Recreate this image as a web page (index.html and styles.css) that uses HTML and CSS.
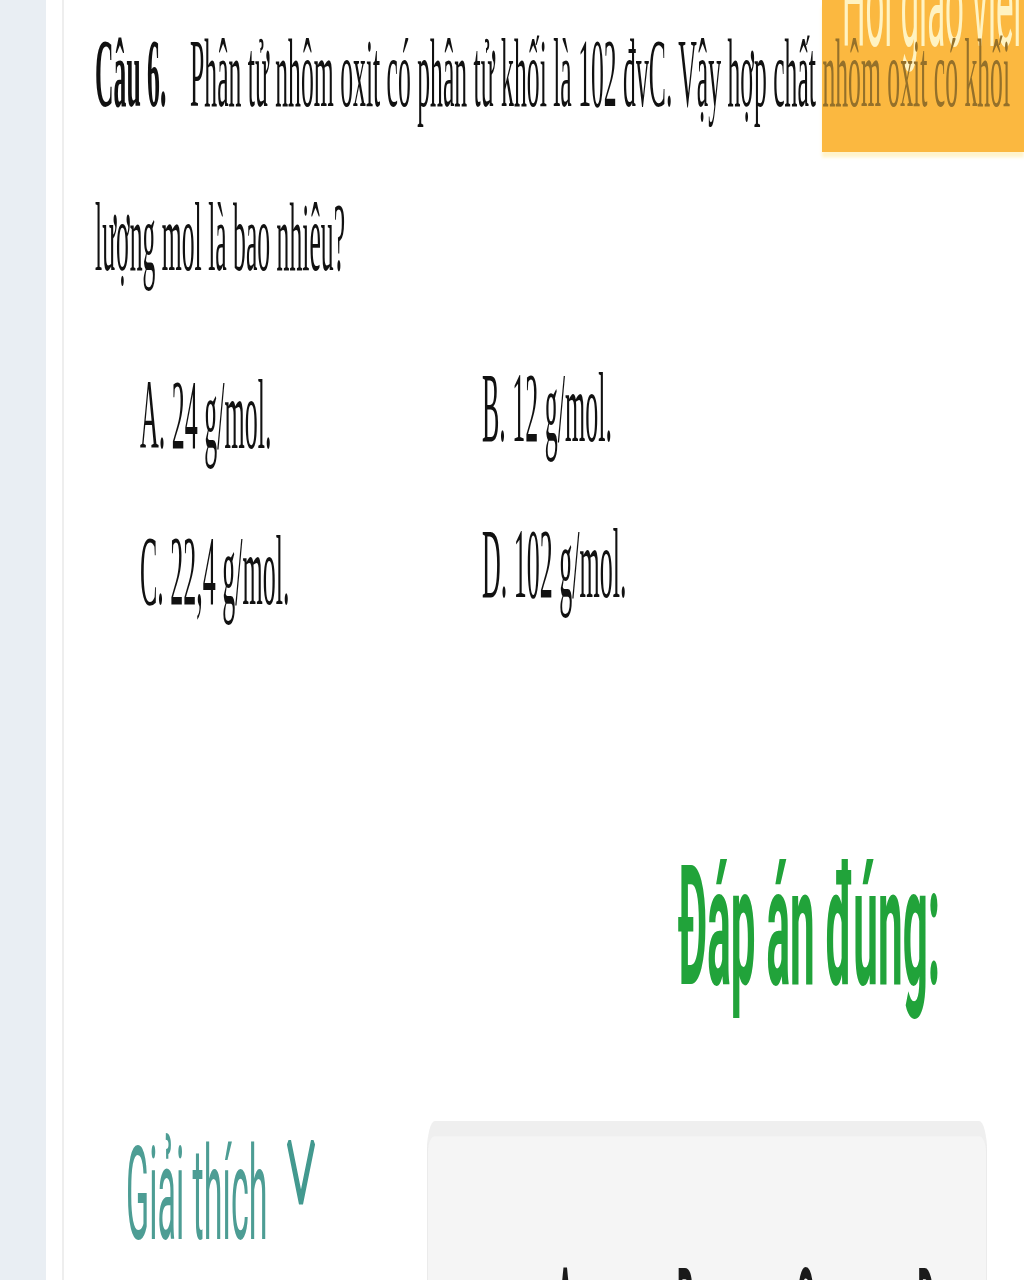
FILE: index.html
```html
<!DOCTYPE html>
<html lang="vi">
<head>
<meta charset="utf-8">
<title>Câu 6</title>
<link rel="stylesheet" href="styles.css">
</head>
<body>
<div class="page">
  <aside class="sidebar"></aside>
  <div class="spacer"></div>
  <main class="card">
    <p class="question"><span class="q-label">Câu 6.</span>Phân tử nhôm oxit có phân tử khối là 102 đvC. Vậy hợp chất <span class="under-badge">nhôm oxit có khối</span><br>lượng mol là bao nhiêu?</p>
    <div class="options">
      <div class="opt">A. 24 g/mol.</div>
      <div class="opt opt-right">B. 12 g/mol.</div>
      <div class="opt">C. 22,4 g/mol.</div>
      <div class="opt opt-right">D. 102 g/mol.</div>
    </div>
    <div class="answer">Đáp án đúng:</div>
    <div class="explain-row">
      <div class="explain-toggle">
        <span class="explain-label">Giải thích</span>
        <svg class="chevron" viewBox="0 0 30 17" width="30" height="17"><polyline points="2.5,0 15,16.3 27.5,0" fill="none" stroke="#43998f" stroke-width="4"/></svg>
      </div>
      <div class="explain-box">
        <div class="choices"><span>A</span><span>B</span><span>C</span><span>D</span></div>
      </div>
    </div>
  </main>
  <div class="ask-badge"><span>Hỏi giáo viên</span></div>
</div>
</body>
</html>
```
FILE: styles.css
```css
html, body {
  margin: 0;
  height: 100%;
  overflow: hidden;
  background: #ffffff;
}

.page {
  position: relative;
  display: flex;
  width: 1024px;
  height: 336.85px;
  overflow: hidden;
  transform: scaleY(3.8);
  transform-origin: 0 0;
}

.sidebar {
  flex: none;
  width: 46px;
  background: #e9eef3;
}

.spacer {
  flex: none;
  width: 16px;
}

.card {
  flex: 1;
  min-width: 0;
  border-left: 2px solid #eeeeee;
  padding-left: 31px;
}

.question {
  position: relative;
  z-index: 1;
  margin: -1.8px 0 0;
  font: 25.7px/43.2px "Liberation Serif", serif;
  color: #111111;
  white-space: nowrap;
}

.q-label {
  display: inline-block;
  width: 95px;
  font-weight: 700;
}

.under-badge {
  color: #94702a;
}

.options {
  display: grid;
  grid-template-columns: 342px auto;
  margin-top: 5.4px;
  padding-left: 45px;
  font: 26px/40.8px "Liberation Serif", serif;
  color: #111111;
  white-space: nowrap;
}

.opt-right {
  margin-top: -2.2px;
}

.answer {
  margin-top: 50.5px;
  padding-left: 583px;
  font: 700 44px/44px Roboto, sans-serif;
  color: #21a33a;
  white-space: nowrap;
}

.explain-row {
  display: flex;
  align-items: flex-start;
  margin-top: 28.6px;
}

.explain-toggle {
  flex: none;
  box-sizing: border-box;
  width: 332px;
  display: flex;
  align-items: flex-start;
  margin-top: 2.5px;
  padding-left: 31px;
}

.explain-label {
  font: 34px/34px Roboto, sans-serif;
  color: #4d9d94;
  white-space: nowrap;
}

.chevron {
  display: block;
  flex: none;
  margin-left: 19px;
  margin-top: 3px;
}

.explain-box {
  flex: none;
  box-sizing: border-box;
  width: 560px;
  height: 80px;
  background: #f5f5f5;
  border: 1px solid #ebebeb;
  border-top: 4.3px solid #efefef;
  border-radius: 8px 8px 0 0;
  padding-top: 31px;
  padding-left: 77px;
}

.choices {
  display: flex;
  font: 700 26px/26px Roboto, sans-serif;
  color: #1a1a1a;
}

.choices span {
  width: 128.3px;
  text-align: center;
}

.ask-badge {
  position: absolute;
  top: 0;
  right: 0;
  z-index: 0;
  width: 202px;
  height: 40.3px;
  overflow: hidden;
  background: #fbb840;
  box-shadow: 0 1.5px 1.5px rgba(255, 228, 130, 0.4);
}

.ask-badge span {
  display: block;
  margin-top: -16.5px;
  padding-left: 20px;
  font: 33px/33px Roboto, sans-serif;
  color: #fff3c2;
  white-space: nowrap;
}
```
